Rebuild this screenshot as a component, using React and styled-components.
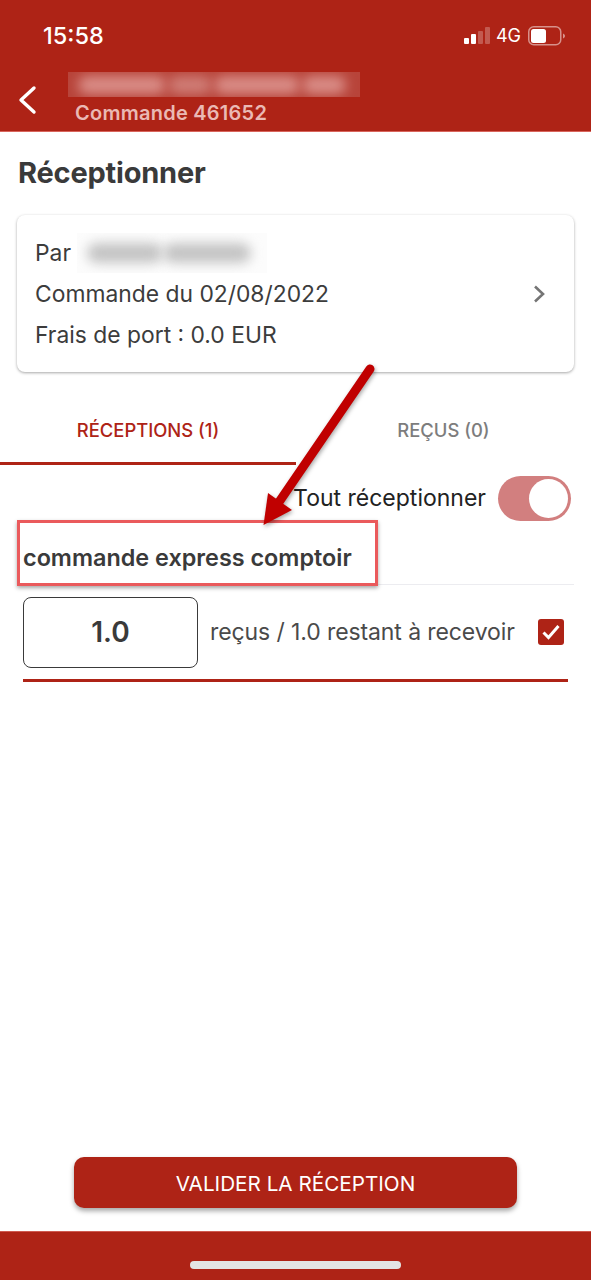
import React from "react";
import styled, { createGlobalStyle } from "styled-components";

const RED = "#ae2316";

const GlobalStyle = createGlobalStyle`
  html, body {
    margin: 0;
    padding: 0;
    background: white;
    font-family: Inter, Roboto, "Liberation Sans", sans-serif;
  }
  * {
    box-sizing: border-box;
  }
`;

const Page = styled.div`
  position: relative;
  width: 591px;
  height: 1280px;
  display: flex;
  flex-direction: column;
  overflow: hidden;
  background: white;
  color: #3a3a3a;
`;

const Header = styled.header`
  height: 132px;
  flex-shrink: 0;
  background: ${RED};
  border-bottom: 1px solid #d9655c;
  display: flex;
  flex-direction: column;
`;

const StatusBar = styled.div`
  height: 72px;
  padding: 22px 26px 0 43px;
  display: flex;
  justify-content: space-between;
  align-items: flex-start;
  color: white;
`;

const Time = styled.span`
  font-size: 23.5px;
  font-weight: 500;
  line-height: 28px;
`;

const StatusIcons = styled.div`
  display: flex;
  align-items: center;
  gap: 6px;
  height: 28px;
`;

const NetworkLabel = styled.span`
  font-size: 18px;
  line-height: 28px;
  margin-right: 1px;
`;

const NavBar = styled.div`
  flex: 1;
  display: flex;
  align-items: flex-start;
  padding-left: 18px;
`;

const BackButton = styled.div`
  width: 50px;
  height: 56px;
  display: flex;
  align-items: center;
`;

const NavTitle = styled.div`
  display: flex;
  flex-direction: column;
`;

const BlurPatch = styled.div`
  width: ${props => props.$width}px;
  height: ${props => props.$height}px;
  background: ${props => props.$background};
  display: flex;
  align-items: center;
  gap: ${props => props.$gap}px;
  padding: 0 10px;
  overflow: hidden;
`;

const Blob = styled.span`
  width: ${props => props.$width}px;
  height: ${props => props.$height}px;
  flex-shrink: 0;
  border-radius: 10px;
  background: ${props => props.$color};
  filter: blur(6px);
`;

const OrderNumber = styled.div`
  margin: 4px 0 0 7px;
  font-size: 20px;
  font-weight: 600;
  line-height: 24px;
  letter-spacing: 0.25px;
  color: #eab9b4;
`;

const Main = styled.main`
  flex: 1;
  display: flex;
  flex-direction: column;
`;

const Title = styled.h1`
  margin: 0;
  padding: 23px 18px 0;
  height: 83px;
  font-size: 29px;
  font-weight: 700;
  line-height: 36px;
  letter-spacing: -0.2px;
  color: #3a3a3a;
`;

const Card = styled.section`
  margin: 0 17px;
  height: 157px;
  border-radius: 8px;
  background: white;
  box-shadow: 0 1px 3px rgba(0, 0, 0, 0.35);
  padding: 17px 28px 17px 18px;
  display: flex;
  align-items: center;
  justify-content: space-between;
`;

const CardLines = styled.div`
  display: flex;
  flex-direction: column;
`;

const CardLine = styled.div`
  display: flex;
  align-items: center;
  height: 41px;
  font-size: 22.85px;
  color: #3c3c3c;
`;

const Tabs = styled.nav`
  display: grid;
  grid-template-columns: 296px 1fr;
  height: 93px;
`;

const Tab = styled.div`
  display: flex;
  align-items: center;
  justify-content: center;
  padding-top: 25px;
  font-size: 18.4px;
  font-weight: 500;
  color: ${props => (props.$active ? RED : "#7d7d7d")};
  border-bottom: 3px solid ${props => (props.$active ? RED : "transparent")};
`;

const ToggleRow = styled.div`
  height: 57px;
  padding: 11px 20px 0 0;
  display: flex;
  justify-content: flex-end;
  align-items: flex-start;
  gap: 12px;
`;

const ToggleLabel = styled.span`
  font-size: 23px;
  line-height: 44px;
  color: #222;
`;

const Toggle = styled.div`
  width: 73px;
  height: 45px;
  border-radius: 23px;
  background: #d27f7f;
  padding: 3px;
  display: flex;
  justify-content: flex-end;
`;

const Knob = styled.div`
  width: 39px;
  height: 39px;
  border-radius: 50%;
  background: white;
`;

const SectionTitle = styled.h2`
  position: relative;
  margin: 0 17px;
  height: 63px;
  padding: 0 6px;
  font-size: 23.4px;
  font-weight: 600;
  line-height: 72px;
  border-bottom: 1px solid #ececf0;
  color: #3a3a3a;
`;

const Highlight = styled.div`
  position: absolute;
  left: 0;
  top: -2px;
  width: 361px;
  height: 66px;
  border: 3px solid #ea5a5c;
  box-shadow: 0 2px 4px rgba(0, 0, 0, 0.35);
`;

const ItemRow = styled.div`
  margin: 13px 23px 0;
  height: 84px;
  padding-bottom: 13px;
  border-bottom: 3px solid ${RED};
  display: flex;
  align-items: center;
  gap: 12px;
  width: 545px;
`;

const QuantityBox = styled.div`
  width: 175px;
  height: 71px;
  border: 1.5px solid #3a3a3a;
  border-radius: 8px;
  display: flex;
  align-items: center;
  justify-content: center;
  font-size: 28px;
  font-weight: 600;
  color: #3a3a3a;
`;

const ItemLabel = styled.span`
  flex: 1;
  font-size: 23px;
  letter-spacing: -0.1px;
  white-space: nowrap;
  color: #4a4a4a;
`;

const CheckBox = styled.div`
  width: 26px;
  height: 26px;
  flex-shrink: 0;
  margin-right: 4px;
  border-radius: 3px;
  background: ${RED};
  display: flex;
  align-items: center;
  justify-content: center;
`;

const Spacer = styled.div`
  flex: 1;
`;

const ValidateButton = styled.button`
  align-self: center;
  width: 443px;
  height: 51px;
  margin-bottom: 23px;
  padding-top: 2px;
  border: 0;
  border-radius: 10px;
  background: ${RED};
  box-shadow: 0 3px 5px rgba(0, 0, 0, 0.35);
  color: white;
  font-family: inherit;
  font-size: 20.7px;
  font-weight: 400;
`;

const Footer = styled.footer`
  height: 49px;
  flex-shrink: 0;
  background: ${RED};
  border-top: 1px solid #cf5a50;
  display: flex;
  justify-content: center;
  padding-top: 29px;
`;

const HomeBar = styled.div`
  width: 211px;
  height: 8px;
  border-radius: 4px;
  background: #e4e4e4;
`;

const ArrowOverlay = styled.svg`
  position: absolute;
  left: 0;
  top: 0;
  pointer-events: none;
  filter: drop-shadow(1px 2px 2px rgba(0, 0, 0, 0.35));
`;

const SignalIcon = () => (
  <svg width="26" height="18" viewBox="0 0 26 18">
    <rect x="0" y="11" width="5" height="6" rx="1" fill="white" />
    <rect x="7" y="7" width="5" height="10" rx="1" fill="white" />
    <rect x="14" y="4" width="5" height="13" rx="1" fill="white" opacity="0.25" />
    <rect x="21" y="0" width="5" height="17" rx="1" fill="white" opacity="0.25" />
  </svg>
);

const BatteryIcon = () => (
  <svg width="37" height="20" viewBox="0 0 37 20">
    <rect x="0.75" y="0.75" width="32" height="18" rx="5" fill="none" stroke="white" strokeOpacity="0.5" strokeWidth="1.5" />
    <rect x="3" y="3" width="15" height="14" rx="2.5" fill="white" />
    <path d="M35 7.5c1.2.4 2 1.4 2 2.5s-.8 2.1-2 2.5z" fill="white" fillOpacity="0.5" />
  </svg>
);

export default function App() {
  return (
    <Page>
      <GlobalStyle />
      <Header>
        <StatusBar>
          <Time>15:58</Time>
          <StatusIcons>
            <SignalIcon />
            <NetworkLabel>4G</NetworkLabel>
            <BatteryIcon />
          </StatusIcons>
        </StatusBar>
        <NavBar>
          <BackButton>
            <svg width="20" height="30" viewBox="0 0 20 30">
              <path d="M16 3 L3 15 L16 27" fill="none" stroke="white" strokeWidth="3.4" strokeLinecap="round" strokeLinejoin="round" />
            </svg>
          </BackButton>
          <NavTitle>
            <BlurPatch $width={292} $height={25} $gap={2} $background="#b8443a">
              <Blob $width={88} $height={18} $color="#d98d87" />
              <Blob $width={44} $height={18} $color="#cf7d76" />
              <Blob $width={86} $height={18} $color="#d98d87" />
              <Blob $width={44} $height={18} $color="#d98d87" />
            </BlurPatch>
            <OrderNumber>Commande 461652</OrderNumber>
          </NavTitle>
        </NavBar>
      </Header>
      <Main>
        <Title>Réceptionner</Title>
        <Card>
          <CardLines>
            <CardLine>
              Par&nbsp;
              <BlurPatch $width={190} $height={40} $gap={0} $background="#fcfcfc">
                <Blob $width={76} $height={20} $color="#c4c4c4" />
                <Blob $width={88} $height={20} $color="#c4c4c4" />
              </BlurPatch>
            </CardLine>
            <CardLine>Commande du 02/08/2022</CardLine>
            <CardLine>Frais de port : 0.0 EUR</CardLine>
          </CardLines>
          <svg width="14" height="20" viewBox="0 0 14 20">
            <path d="M3 2.5 L11 10 L3 17.5" fill="none" stroke="#757575" strokeWidth="2.6" />
          </svg>
        </Card>
        <Tabs>
          <Tab $active>RÉCEPTIONS (1)</Tab>
          <Tab>REÇUS (0)</Tab>
        </Tabs>
        <ToggleRow>
          <ToggleLabel>Tout réceptionner</ToggleLabel>
          <Toggle>
            <Knob />
          </Toggle>
        </ToggleRow>
        <SectionTitle>
          commande express comptoir
          <Highlight />
        </SectionTitle>
        <ItemRow>
          <QuantityBox>1.0</QuantityBox>
          <ItemLabel>reçus / 1.0 restant à recevoir</ItemLabel>
          <CheckBox>
            <svg width="20" height="18" viewBox="0 0 20 18">
              <path d="M2.5 9.5 L7.5 14.5 L17.5 3" fill="none" stroke="white" strokeWidth="3" />
            </svg>
          </CheckBox>
        </ItemRow>
        <Spacer />
        <ValidateButton>VALIDER LA RÉCEPTION</ValidateButton>
      </Main>
      <Footer>
        <HomeBar />
      </Footer>
      <ArrowOverlay width="591" height="1280" viewBox="0 0 591 1280">
        <path d="M370 369 L277 505" fill="none" stroke="#c00000" strokeWidth="9" strokeLinecap="round" />
        <path d="M263.5 525 L268 493 L292 510 Z" fill="#c00000" />
      </ArrowOverlay>
    </Page>
  );
}
